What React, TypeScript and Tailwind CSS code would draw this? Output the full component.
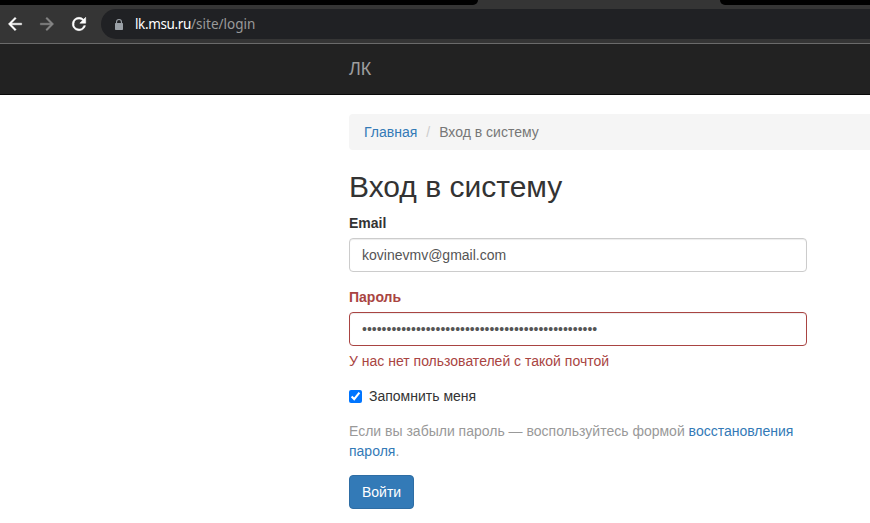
function BrowserChrome() {
  return (
    <div className="h-11 border-b border-[#6b6b6b] bg-[#353535]">
      <div className="flex h-[5px] justify-between">
        <div className="w-[478px] rounded-br-[6px] bg-black" />
        <div className="w-[150px] rounded-bl-[6px] bg-black" />
      </div>
      <div className="flex h-[38px] items-center">
        <svg className="ml-[5px] size-5 shrink-0" viewBox="0 0 24 24" fill="#fff">
          <path d="M20 11H7.83l5.59-5.59L12 4l-8 8 8 8 1.41-1.41L7.83 13H20z" stroke="#fff" strokeWidth=".5" />
        </svg>
        <svg className="ml-3 size-5 shrink-0" viewBox="0 0 24 24" fill="#868686">
          <path d="M4 11h12.17l-5.59-5.59L12 4l8 8-8 8-1.41-1.41L16.17 13H4z" stroke="#868686" strokeWidth=".5" />
        </svg>
        <svg className="ml-3 size-5 shrink-0" viewBox="0 0 24 24" fill="#fff">
          <path d="M17.65 6.35A7.96 7.96 0 0 0 12 4a8 8 0 1 0 7.73 10h-2.08A6 6 0 1 1 12 6c1.66 0 3.14.69 4.22 1.78L13 11h7V4z" stroke="#fff" strokeWidth=".7" />
        </svg>
        <div className="ml-3 flex h-[30px] flex-1 items-center rounded-l-full bg-[#202124]">
          <svg className="ml-[14px] h-[11px] w-2 shrink-0" viewBox="0 0 8 11" fill="#9aa0a6">
            <path d="M1 4V3a3 3 0 0 1 6 0v1h.3q.7 0 .7.7v5.6q0 .7-.7.7H.7q-.7 0-.7-.7V4.7Q0 4 .7 4zM2.1 4h3.8V3a1.9 1.9 0 0 0-3.8 0z" />
          </svg>
          <span className="ml-3 font-['Noto_Sans',sans-serif] text-[13.5px] leading-5 whitespace-nowrap text-[#9a9a9a]">
            <span className="tracking-[-0.36px] text-white">lk.msu.ru</span>/site/login
          </span>
        </div>
      </div>
    </div>
  );
}

const field =
  "block h-[34px] w-[458px] rounded-[4px] border bg-white px-3 py-1.5 text-sm leading-5 text-[#555] shadow-[inset_0_1px_1px_rgba(0,0,0,0.075)] outline-none";

export default function App() {
  return (
    <div className="h-[523px] w-[870px] overflow-hidden bg-white font-['Liberation_Sans',Arial,sans-serif] text-sm leading-5 text-[#333]">
      <BrowserChrome />
      <nav className="h-[51px] border-b border-[#080808] bg-[#222] pt-[15px] pl-[349px]">
        <a className="block text-lg leading-5 text-[#9d9d9d]">ЛК</a>
      </nav>
      <main className="pt-[19px] pl-[349px]">
        <ol className="mb-5 flex h-9 rounded-l-[4px] bg-[#f5f5f5] px-[15px] py-2">
          <li className="text-[#337ab7]">Главная</li>
          <li className="text-[#777]">
            <span className="px-[9px] text-[#ccc]">/</span>Вход в систему
          </li>
        </ol>
        <h1 className="mb-[10px] text-[30px] leading-[33px]">Вход в систему</h1>
        <form>
          <label htmlFor="email" className="mb-[5px] block font-bold">Email</label>
          <input id="email" className={`${field} border-[#ccc]`} defaultValue="kovinevmv@gmail.com" />
          <label htmlFor="password" className="mt-[15px] mb-[5px] block font-bold text-[#a94442]">Пароль</label>
          <input id="password" type="password" className={`${field} border-[#a94442]`} defaultValue={"x".repeat(48)} />
          <p className="mt-[5px] text-[#a94442]">У нас нет пользователей с такой почтой</p>
          <label className="mt-[15px] flex items-center">
            <input type="checkbox" defaultChecked className="mr-[7px] size-[13px]" />
            Запомнить меня
          </label>
          <p className="mt-[15px] w-[458px] text-[#999]">
            Если вы забыли пароль — воспользуйтесь формой <a className="text-[#337ab7]">восстановления пароля</a>.
          </p>
          <button type="button" className="mt-[14px] block h-[34px] rounded-[4px] border border-[#2e6da4] bg-[#337ab7] px-3 text-white">
            Войти
          </button>
        </form>
      </main>
    </div>
  );
}
